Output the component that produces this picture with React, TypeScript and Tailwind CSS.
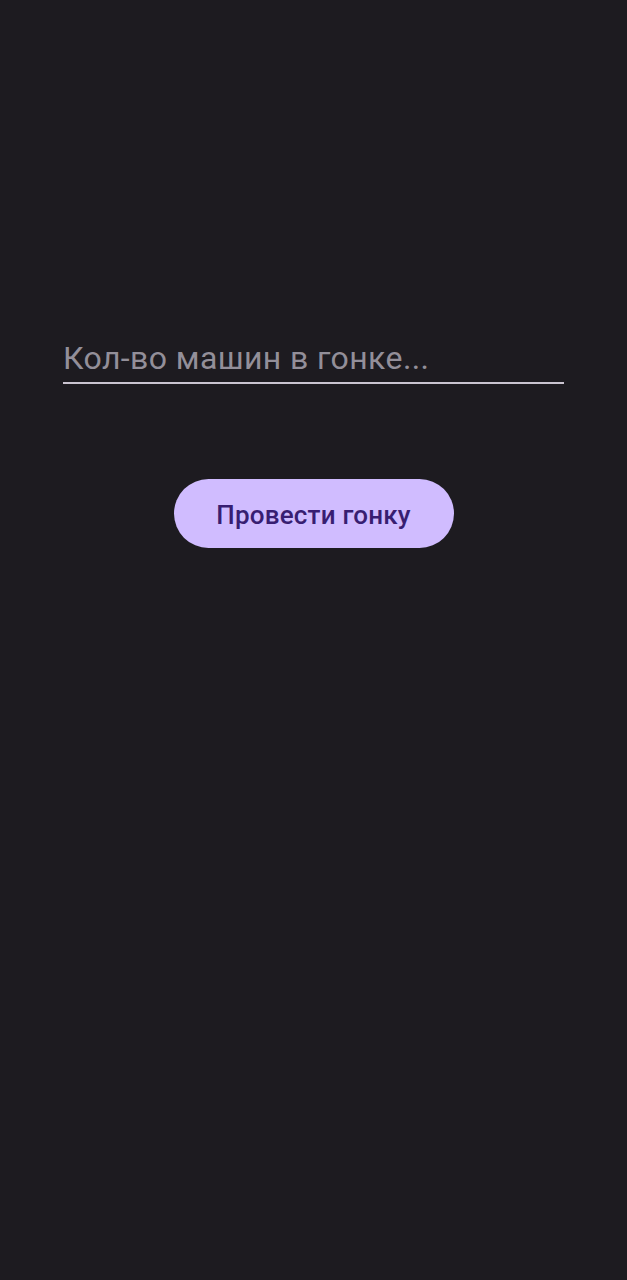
export default function App() {
  return (
    <div className="min-h-[1280px] w-full bg-[#1d1b20] font-['Roboto',sans-serif]">
      <div className="flex flex-col items-center pt-[335px]">
        <div className="w-[501px] border-b-2 border-[#cac4d0]">
          <input
            className="h-[47px] w-full bg-transparent text-[32px] leading-[47px] tracking-[0.4px] text-[#e6e0e9] outline-none placeholder:text-[#938f99]"
            placeholder="Кол-во машин в гонке..."
          />
        </div>
        <button className="mt-[95px] h-[69px] w-[280px] rounded-full bg-[#d0bcff] pt-[3px] text-[26px] font-medium tracking-[0.2px] text-[#381e72]">
          Провести гонку
        </button>
      </div>
    </div>
  )
}
